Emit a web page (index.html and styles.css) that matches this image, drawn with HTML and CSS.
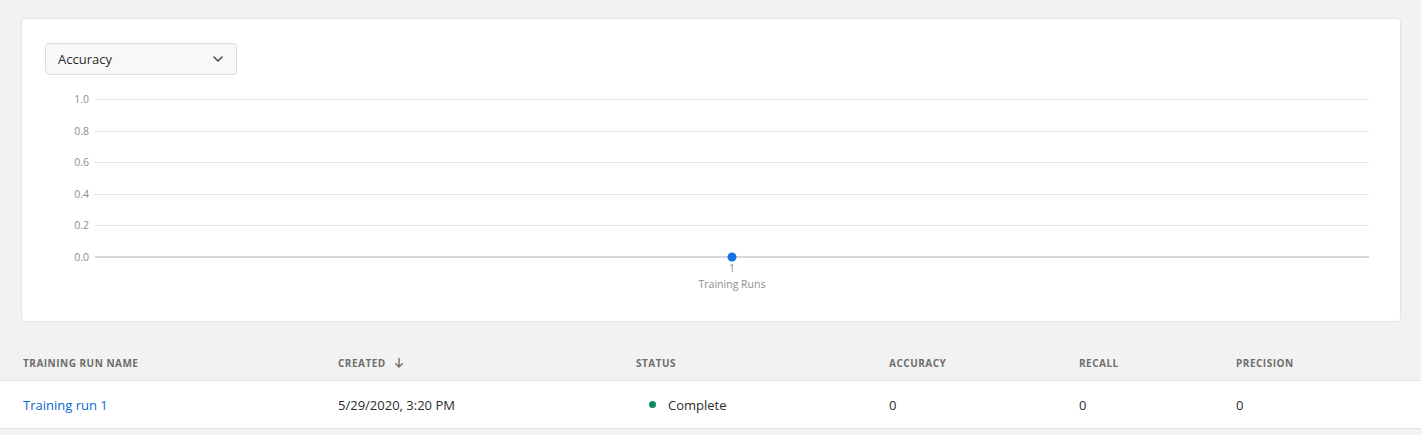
FILE: index.html
```html
<!DOCTYPE html>
<html>
<head>
<meta charset="utf-8">
<link rel="stylesheet" href="styles.css">
</head>
<body>
<div class="page">
  <section class="card">
    <div class="picker">
      <span class="picker-label">Accuracy</span>
      <svg class="chevron" width="10" height="6" viewBox="0 0 10 6"><path d="M1 1 L5 5 L9 1" fill="none" stroke="#4b4b4b" stroke-width="1.6" stroke-linecap="round" stroke-linejoin="round"/></svg>
    </div>
    <svg class="chart" width="1378" height="245" viewBox="0 0 1378 245">
      <g class="grid">
        <line x1="73" x2="1347" y1="24.5" y2="24.5"/>
        <line x1="73" x2="1347" y1="56.5" y2="56.5"/>
        <line x1="73" x2="1347" y1="87.5" y2="87.5"/>
        <line x1="73" x2="1347" y1="119.5" y2="119.5"/>
        <line x1="73" x2="1347" y1="150.5" y2="150.5"/>
        <line class="base" x1="73" x2="1347" y1="182" y2="182"/>
      </g>
      <g class="ylabels">
        <text x="67" y="28">1.0</text>
        <text x="67" y="60">0.8</text>
        <text x="67" y="91">0.6</text>
        <text x="67" y="123">0.4</text>
        <text x="67" y="154">0.2</text>
        <text x="67" y="186">0.0</text>
      </g>
      <circle cx="710" cy="182" r="4.5" fill="#1473e6"/>
      <text class="xlabel" x="710" y="197">1</text>
      <text class="xlabel" x="710" y="213">Training Runs</text>
    </svg>
  </section>

  <div class="table">
    <div class="thead">
      <div class="th">Training Run Name</div>
      <div class="th">Created
        <svg class="sort" width="8" height="10" viewBox="0 0 8 10"><path d="M4 0.5 V9 M0.8 5.8 L4 9 L7.2 5.8" fill="none" stroke="#6e6e6e" stroke-width="1.4" stroke-linecap="round" stroke-linejoin="round"/></svg>
      </div>
      <div class="th">Status</div>
      <div class="th">Accuracy</div>
      <div class="th">Recall</div>
      <div class="th">Precision</div>
    </div>
    <div class="tr">
      <div class="td"><a class="link" href="#">Training run 1</a></div>
      <div class="td">5/29/2020, 3:20 PM</div>
      <div class="td status"><span class="dot"></span>Complete</div>
      <div class="td">0</div>
      <div class="td">0</div>
      <div class="td">0</div>
    </div>
  </div>
</div>
</body>
</html>
```

FILE: styles.css
```css
html, body {
  margin: 0;
  padding: 0;
  background: #f2f2f2;
  font-family: "Open Sans", "Liberation Sans", sans-serif;
  color: #2c2c2c;
}

.page {
  padding-top: 18px;
}

.card {
  margin: 0 20px 0 21px;
  height: 304px;
  background: #fff;
  border: 1px solid #e4e4e4;
  border-radius: 4px;
  box-sizing: border-box;
  padding-top: 24px;
}

.picker {
  margin-left: 23px;
  width: 192px;
  height: 32px;
  box-sizing: border-box;
  border: 1px solid #dcdcdc;
  border-radius: 4px;
  background: #f8f8f8;
  display: flex;
  align-items: center;
  justify-content: space-between;
  padding: 0 13px 0 12px;
}

.picker-label {
  font-size: 13px;
  color: #2c2c2c;
}

.chart {
  display: block;
}

.grid line {
  stroke: #e3e3e3;
  stroke-width: 1;
}

.grid line.base {
  stroke: #d8d8d8;
  stroke-width: 2;
}

.ylabels text {
  font-size: 10.5px;
  fill: #8e8e8e;
  text-anchor: end;
}

.xlabel {
  font-size: 10.5px;
  fill: #8e8e8e;
  text-anchor: middle;
}

.table {
  margin-top: 23px;
}

.thead, .tr {
  display: grid;
  grid-template-columns: 315px 298px 253px 190px 157px 1fr;
  padding-left: 23px;
  align-items: center;
}

.thead {
  height: 35px;
  border-bottom: 1px solid #e1e1e1;
}

.th {
  font-size: 10px;
  font-weight: 700;
  letter-spacing: 0.05em;
  text-transform: uppercase;
  color: #6e6e6e;
  display: flex;
  align-items: center;
  gap: 9px;
}

.tr {
  height: 47px;
  background: #fff;
  border-bottom: 1px solid #e1e1e1;
}

.td {
  font-size: 13px;
  color: #2c2c2c;
}

.link {
  color: #0d66d0;
  text-decoration: none;
}

.status {
  display: flex;
  align-items: center;
  padding-left: 13px;
}

.dot {
  width: 7px;
  height: 7px;
  border-radius: 50%;
  background: #0f8a63;
  margin-right: 12px;
}
```
